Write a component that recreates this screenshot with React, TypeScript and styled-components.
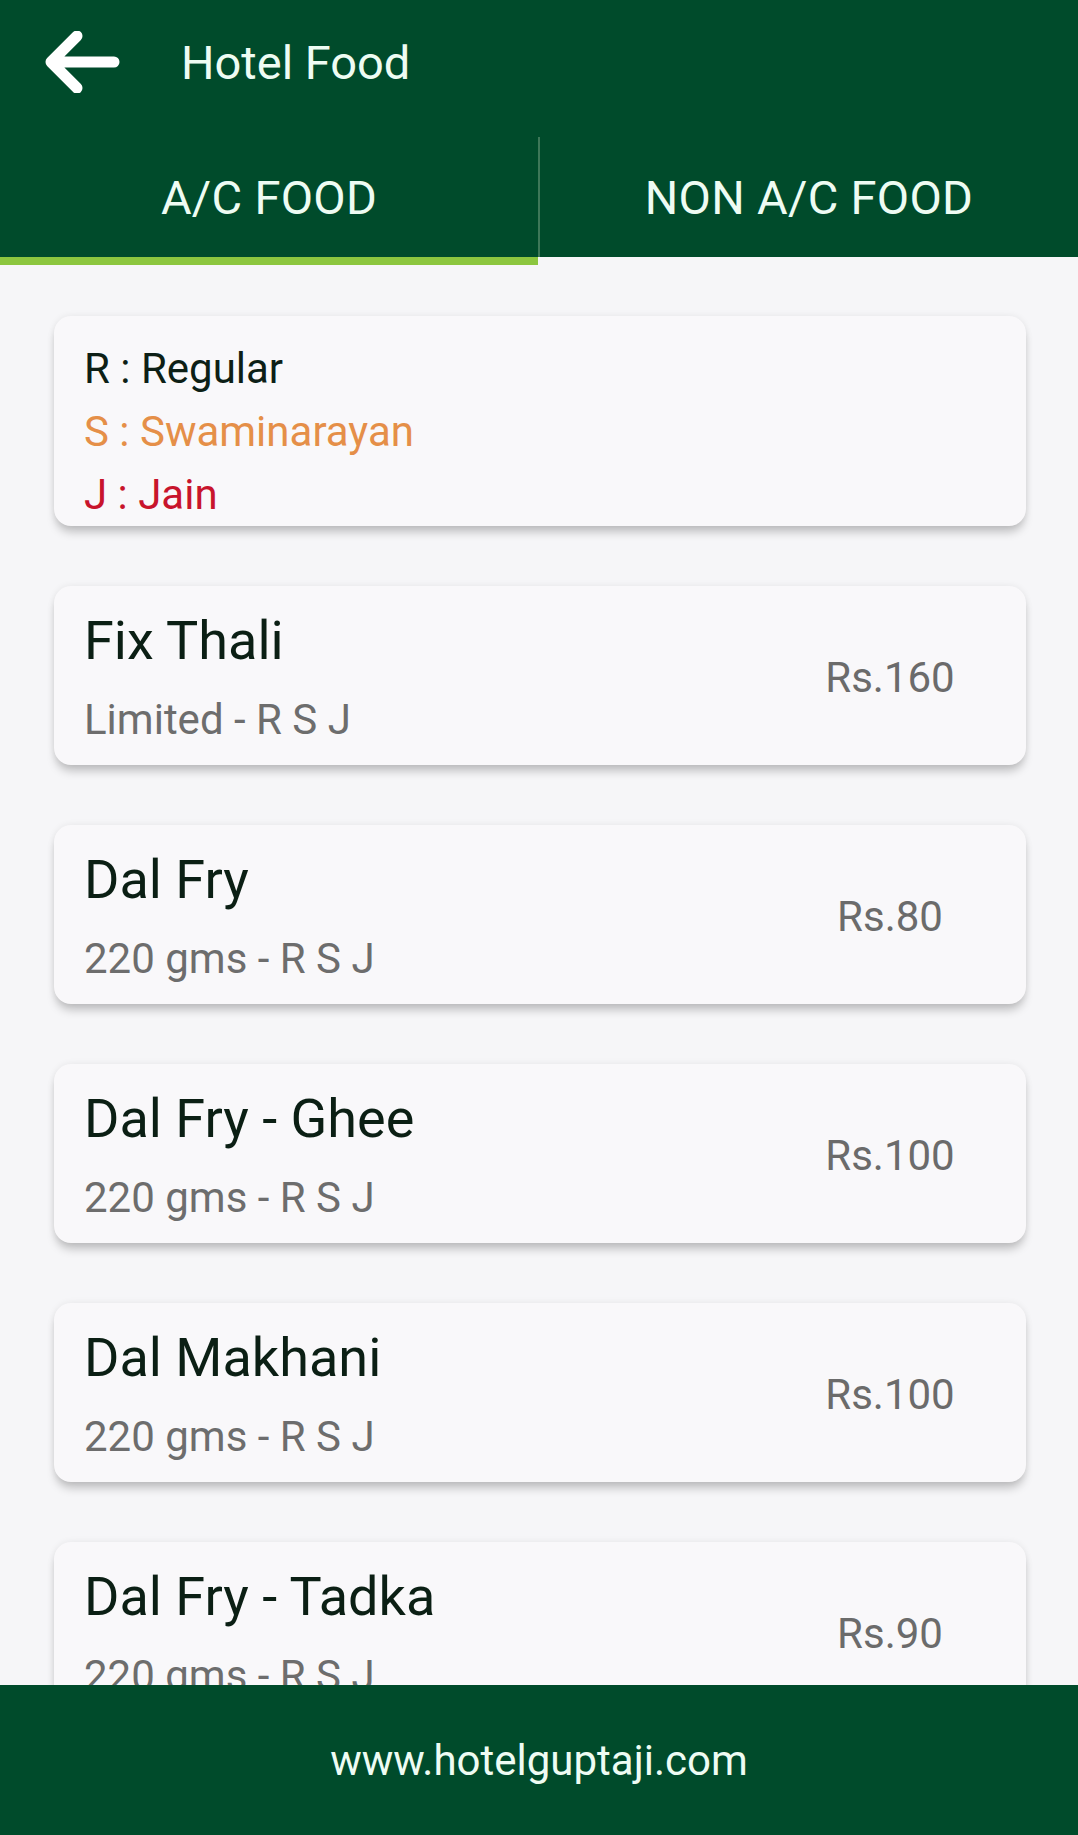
import React from "react";
import styled, { createGlobalStyle } from "styled-components";

const GlobalStyle = createGlobalStyle`
  html, body {
    margin: 0;
    padding: 0;
    background: #f6f6f8;
  }
  * { box-sizing: border-box; }
  body {
    font-family: Roboto, "Noto Sans", "Liberation Sans", sans-serif;
  }
`;

const GREEN = "#004b2b";

const Page = styled.div`
  height: 1835px;
  display: flex;
  flex-direction: column;
  background: #f6f6f8;
  overflow: hidden;
`;

const AppBar = styled.header`
  height: 137px;
  flex: 0 0 auto;
  display: flex;
  align-items: center;
  padding: 0 0 13px 44px;
  background: ${GREEN};
`;

const BackButton = styled.button`
  display: flex;
  padding: 0;
  border: none;
  background: none;
  width: 76px;
  height: 62px;
  cursor: pointer;
`;

const Title = styled.h1`
  margin: 0 0 0 61px;
  font-size: 47px;
  line-height: 55px;
  font-weight: 400;
  color: #eefcf3;
`;

const TabBar = styled.nav`
  display: flex;
  align-items: flex-start;
  flex: 0 0 auto;
`;

const Tab = styled.div<{ $active?: boolean; $divider?: boolean }>`
  flex: 1 1 0;
  height: ${(p) => (p.$active ? "128px" : "120px")};
  display: flex;
  align-items: center;
  justify-content: center;
  background: ${GREEN};
  border-bottom: ${(p) => (p.$active ? "8px solid #8cc63f" : "none")};
  border-left: ${(p) => (p.$divider ? "2px solid #3d7758" : "none")};
  font-size: 47px;
  line-height: 55px;
  color: #eefcf3;
  letter-spacing: 0.3px;
`;

const Content = styled.main`
  flex: 1 1 auto;
  overflow: hidden;
  display: flex;
  flex-direction: column;
  gap: 60px;
  padding: 51px 52px 0 54px;
`;

const Card = styled.div`
  flex: 0 0 auto;
  background: #f9f8fa;
  border-radius: 17px;
  box-shadow: 0 8px 10px -2px rgba(0, 0, 0, 0.22), 0 0 7px rgba(0, 0, 0, 0.07);
`;

const LegendCard = styled(Card)`
  height: 210px;
  padding: 21px 30px 0 30px;
  display: flex;
  flex-direction: column;
`;

const LegendLine = styled.div<{ $color: string }>`
  font-size: 42px;
  line-height: 63px;
  color: ${(p) => p.$color};
`;

const ItemCard = styled(Card)`
  height: 179px;
  padding: 23px 36px 19px 30px;
  display: flex;
  align-items: center;
  justify-content: space-between;
`;

const ItemInfo = styled.div`
  display: flex;
  flex-direction: column;
  align-self: flex-start;
`;

const ItemName = styled.div`
  font-size: 54px;
  line-height: 64px;
  color: #0b1f14;
`;

const ItemMeta = styled.div`
  margin-top: 22px;
  font-size: 42px;
  line-height: 50px;
  color: #6d6d6d;
`;

const Price = styled.div`
  width: 200px;
  text-align: center;
  font-size: 42px;
  line-height: 50px;
  color: #6b6b6b;
`;

const Footer = styled.footer`
  height: 150px;
  flex: 0 0 auto;
  display: flex;
  align-items: center;
  justify-content: center;
  background: ${GREEN};
  font-size: 42px;
  color: #eefcf3;
`;

const items = [
  { name: "Fix Thali", meta: "Limited - R S J", price: "Rs.160" },
  { name: "Dal Fry", meta: "220 gms - R S J", price: "Rs.80" },
  { name: "Dal Fry - Ghee", meta: "220 gms - R S J", price: "Rs.100" },
  { name: "Dal Makhani", meta: "220 gms - R S J", price: "Rs.100" },
  { name: "Dal Fry - Tadka", meta: "220 gms - R S J", price: "Rs.90" },
];

export default function App() {
  return (
    <>
      <GlobalStyle />
      <Page>
        <AppBar>
          <BackButton aria-label="Back">
            <svg width="76" height="62" viewBox="0 0 76 62" fill="none">
              <path
                d="M7 31H70M33 5L7 31L33 57"
                stroke="#ffffff"
                strokeWidth="11"
                strokeLinecap="round"
                strokeLinejoin="round"
              />
            </svg>
          </BackButton>
          <Title>Hotel Food</Title>
        </AppBar>
        <TabBar>
          <Tab $active>A/C FOOD</Tab>
          <Tab $divider>NON A/C FOOD</Tab>
        </TabBar>
        <Content>
          <LegendCard>
            <LegendLine $color="#0d1f16">R : Regular</LegendLine>
            <LegendLine $color="#e58f48">S : Swaminarayan</LegendLine>
            <LegendLine $color="#c8142c">J : Jain</LegendLine>
          </LegendCard>
          {items.map((it) => (
            <ItemCard key={it.name}>
              <ItemInfo>
                <ItemName>{it.name}</ItemName>
                <ItemMeta>{it.meta}</ItemMeta>
              </ItemInfo>
              <Price>{it.price}</Price>
            </ItemCard>
          ))}
        </Content>
        <Footer>www.hotelguptaji.com</Footer>
      </Page>
    </>
  );
}
